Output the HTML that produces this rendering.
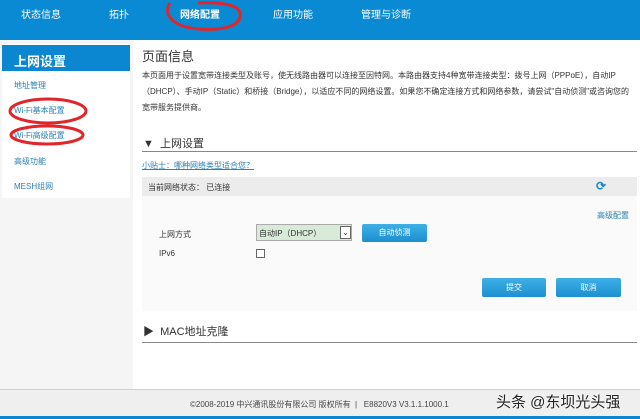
<!DOCTYPE html>
<html><head><meta charset="utf-8"><style>
*{margin:0;padding:0;box-sizing:border-box}
body{width:640px;height:419px;overflow:hidden;background:#f5f5f5;font-family:"Liberation Sans","Noto Sans CJK SC",sans-serif;position:relative;color:#333}
.a{position:absolute;white-space:nowrap}
.hdr{left:0;top:0;width:640px;height:40px;background:#0a8ad2}
.nav{top:6px;color:#fff;font-size:10px}
.side{left:2px;top:44px;width:128px;height:154px;background:#fff}
.sh{left:2px;top:45px;width:128px;height:26px;background:#0a87d0;color:#fff;font-size:13px;font-weight:bold;padding:6px 0 0 12px}
.si{left:14px;font-size:8px;color:#2a80b8}
.main{left:133px;top:40px;width:507px;height:349px;background:#fff}
.t{font-size:8px;color:#333}
.btn{background:linear-gradient(#3fb0e6,#1c8fd0);color:#fff;font-size:8px;text-align:center;border-radius:2px;line-height:19px}
</style></head><body>
<div class="a hdr"></div>
<div class="a nav" style="left:21px">状态信息</div>
<div class="a nav" style="left:109px">拓扑</div>
<div class="a nav" style="left:180px;font-weight:bold">网络配置</div>
<div class="a nav" style="left:273px">应用功能</div>
<div class="a nav" style="left:361px">管理与诊断</div>
<svg class="a" style="left:158px;top:0" width="90" height="34"><path d="M12 3 C6 12,10 26,40 29 C70 31,84 24,82 13 C80 4,60 2,40 3" fill="none" stroke="#e0262a" stroke-width="3"/></svg>

<div class="a side"></div>
<div class="a sh">上网设置</div>
<div class="a si" style="top:80px">地址管理</div>
<div class="a si" style="top:105px">Wi-Fi基本配置</div>
<div class="a si" style="top:130px">Wi-Fi高级配置</div>
<div class="a si" style="top:156px">高级功能</div>
<div class="a si" style="top:181px">MESH组网</div>
<svg class="a" style="left:5px;top:95px" width="85" height="52"><ellipse cx="43" cy="16" rx="38" ry="12" fill="none" stroke="#e0262a" stroke-width="3"/><ellipse cx="42" cy="40" rx="36" ry="9" fill="none" stroke="#e0262a" stroke-width="3"/></svg>

<div class="a main"></div>
<div class="a" style="left:142px;top:46px;font-size:13px;color:#333">页面信息</div>
<div class="a t" style="left:142px;top:70px">本页面用于设置宽带连接类型及账号，使无线路由器可以连接至因特网。本路由器支持4种宽带连接类型：拨号上网（PPPoE），自动IP</div>
<div class="a t" style="left:142px;top:86px">（DHCP）、手动IP（Static）和桥接（Bridge），以适应不同的网络设置。如果您不确定连接方式和网络参数，请尝试"自动侦测"或咨询您的</div>
<div class="a t" style="left:142px;top:102px">宽带服务提供商。</div>
<div class="a" style="left:143px;top:135px;font-size:11px">▼&nbsp; 上网设置</div>
<div class="a" style="left:142px;top:151px;width:495px;height:1px;background:#888"></div>
<div class="a t" style="left:142px;top:160px;color:#2a80b8;text-decoration:underline">小贴士：哪种网络类型适合您？</div>
<div class="a" style="left:142px;top:177px;width:495px;height:19px;background:#ececec"></div>
<div class="a t" style="left:148px;top:182px">当前网络状态： 已连接</div>
<div class="a" style="left:596px;top:179px;font-size:12px;color:#1a8ad0;font-weight:bold">⟳</div>
<div class="a" style="left:142px;top:196px;width:495px;height:115px;background:#fafafa"></div>
<div class="a t" style="left:597px;top:210px;color:#2a80b8">高级配置</div>
<div class="a t" style="left:159px;top:229px">上网方式</div>
<div class="a" style="left:256px;top:224px;width:96px;height:17px;background:#d8ead8;border:1px solid #aaa"></div>
<div class="a t" style="left:259px;top:228px">自动IP（DHCP）</div>
<div class="a" style="left:340px;top:226px;width:11px;height:13px;background:#fff;border:1px solid #666;font-size:8px;text-align:center;line-height:11px">⌄</div>
<div class="a btn" style="left:362px;top:224px;width:65px;height:18px;line-height:18px">自动侦测</div>
<div class="a t" style="left:159px;top:249px">IPv6</div>
<div class="a" style="left:256px;top:249px;width:9px;height:9px;border:1px solid #666;background:#fff"></div>
<div class="a btn" style="left:482px;top:278px;width:64px;height:19px">提交</div>
<div class="a btn" style="left:556px;top:278px;width:65px;height:19px">取消</div>
<div class="a" style="left:143px;top:323px;font-size:11px">▶&nbsp; MAC地址克隆</div>
<div class="a" style="left:142px;top:342px;width:495px;height:1px;background:#888"></div>

<div class="a" style="left:0;top:389px;width:640px;height:27px;background:#efefef;border-top:1px solid #b8d8e8"></div>
<div class="a" style="left:0;top:416px;width:640px;height:3px;background:#0a87d0"></div>
<div class="a" style="left:190px;top:399px;font-size:8px;color:#444">©2008-2019 中兴通讯股份有限公司 版权所有 &nbsp;| &nbsp; E8820V3 V3.1.1.1000.1</div>
<div class="a" style="left:496px;top:391px;font-size:15px;color:#222;text-shadow:0 0 2px #fff">头条 @东坝光头强</div>
</body></html>
